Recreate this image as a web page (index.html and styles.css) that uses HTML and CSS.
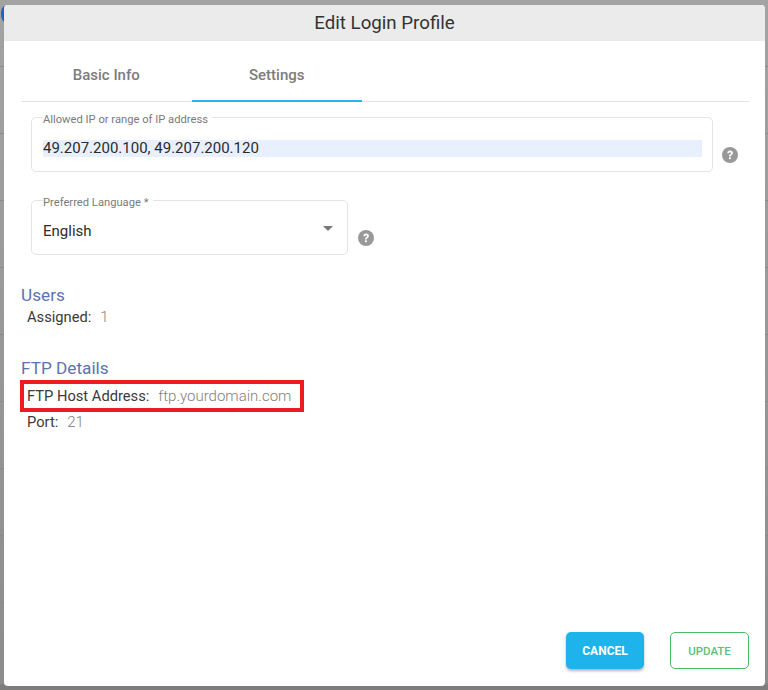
FILE: index.html
```html
<!DOCTYPE html>
<html lang="en">
<head>
<meta charset="utf-8">
<title>Edit Login Profile</title>
<link rel="stylesheet" href="styles.css">
</head>
<body>
<div class="page-dot"></div>
<main class="modal">
  <header class="modal-title">Edit Login Profile</header>
  <nav class="tabs">
    <div class="tab">Basic Info</div>
    <div class="tab tab-active">Settings</div>
  </nav>
  <section class="fields">
    <div class="field-row">
      <fieldset class="field field-wide">
        <legend>Allowed IP or range of IP address</legend>
        <div class="field-value field-filled">49.207.200.100, 49.207.200.120</div>
      </fieldset>
      <svg class="help" viewBox="0 0 16 16" aria-hidden="true"><circle cx="8" cy="8" r="8" fill="#999"/><path d="M5.3 6.2C5.4 4.6 6.5 3.6 8.1 3.6c1.6 0 2.8 1 2.8 2.3 0 1.1-.6 1.7-1.4 2.2-.6.4-.8.7-.8 1.3H7c0-1.1.3-1.7 1.1-2.2.6-.4.9-.7.9-1.2 0-.5-.4-.8-.9-.8-.6 0-1 .4-1.1 1H5.300z" fill="#fff"/><rect x="7" y="10.300" width="1.800" height="1.900" fill="#fff"/></svg>
    </div>
    <div class="field-row field-row-lang">
      <fieldset class="field field-narrow">
        <legend>Preferred Language *</legend>
        <div class="field-value field-select">English<span class="caret"></span></div>
      </fieldset>
      <svg class="help help-lang" viewBox="0 0 16 16" aria-hidden="true"><circle cx="8" cy="8" r="8" fill="#999"/><path d="M5.3 6.2C5.4 4.6 6.5 3.6 8.1 3.6c1.6 0 2.8 1 2.8 2.3 0 1.1-.6 1.7-1.4 2.2-.6.4-.8.7-.8 1.3H7c0-1.1.3-1.7 1.1-2.2.6-.4.9-.7.9-1.2 0-.5-.4-.8-.9-.8-.6 0-1 .4-1.1 1H5.300z" fill="#fff"/><rect x="7" y="10.300" width="1.800" height="1.900" fill="#fff"/></svg>
    </div>
  </section>
  <section class="details">
    <h2 class="details-heading">Users</h2>
    <p class="detail"><span class="detail-label">Assigned:</span><span class="detail-value">1</span></p>
    <h2 class="details-heading details-heading-ftp">FTP Details</h2>
    <p class="detail detail-marked"><span class="detail-label">FTP Host Address:</span><span class="detail-value">ftp.yourdomain.com</span></p>
    <p class="detail detail-port"><span class="detail-label">Port:</span><span class="detail-value">21</span></p>
  </section>
  <footer class="actions">
    <button class="btn btn-cancel" type="button">CANCEL</button>
    <button class="btn btn-update" type="button">UPDATE</button>
  </footer>
</main>
</body>
</html>
```
FILE: styles.css
```css
* { box-sizing: border-box; }
html, body { margin: 0; height: 690px; overflow: hidden; }
body {
  padding: 5px 3px 4px 4px;
  background:
    repeating-linear-gradient(transparent 0 66px, #8a8a8a 66px 67px),
    linear-gradient(#a3a3a3, #989898 50%, #8c8c8c 99%, #7d7d7d 99.3%);
  font-family: Roboto, "Liberation Sans", sans-serif;
}
.page-dot {
  position: absolute;
  left: 1px;
  top: 6px;
  width: 8px;
  height: 16px;
  border-radius: 50%;
  background: #1a62c4;
}
.modal {
  position: relative;
  height: 681px;
  display: flex;
  flex-direction: column;
  background: #fff;
  border-radius: 4px;
}
.modal-title {
  height: 36px;
  flex: none;
  background: #ebebeb;
  border-radius: 4px 4px 0 0;
  color: #333;
  font-size: 18.700px;
  line-height: 36px;
  text-align: center;
}
.tabs {
  display: flex;
  flex: none;
  height: 61px;
  margin: 0 16px 0 17px;
  border-bottom: 1px solid #e2e2e2;
}
.tab {
  width: 170.5px;
  padding-top: 25px;
  color: #7c7c7c;
  font-size: 15px;
  font-weight: 500;
  text-align: center;
}
.tab-active {
  height: 61px;
  border-bottom: 2px solid #29b6f0;
}
.fields {
  flex: none;
  padding: 6px 0 0 27px;
}
.field-row {
  display: flex;
  align-items: flex-start;
}
.field-row-lang { margin-top: 19.500px; }
.field {
  margin: 0;
  padding: 0 10px 0 11px;
  height: 63.500px;
  border: 1px solid #e4e4e4;
  border-radius: 5px;
}
.field-wide { width: 682px; }
.field-narrow { width: 317px; }
.field legend {
  margin-left: 0;
  padding: 5px 4px 0 0;
  color: #7a7a7a;
  font-size: 11.200px;
  line-height: 13px;
}
.field-value {
  margin-top: 14px;
  color: #2b2b2b;
  font-size: 15px;
  line-height: 17px;
}
.field-filled { background: #e8f0fe; }
.field-select {
  position: relative;
  margin-top: 13.500px;
}
.caret {
  position: absolute;
  right: 4px;
  top: 3.500px;
  width: 0;
  height: 0;
  border-left: 5px solid transparent;
  border-right: 5px solid transparent;
  border-top: 5px solid #777;
}
.help {
  flex: none;
  width: 16px;
  height: 16px;
  margin: 39px 0 0 9px;
}
.help-lang { margin-left: 10px; }
.details {
  flex: 1;
  padding: 31.500px 0 0 17px;
}
.details-heading {
  margin: 0;
  color: #5d72b3;
  font-size: 17.200px;
  font-weight: 400;
  line-height: 19px;
}
.details-heading-ftp { margin-top: 33px; }
.detail {
  width: fit-content;
  margin: 4px 0 0 6px;
  color: #3a3a3a;
  font-size: 14.700px;
  line-height: 17px;
}
.detail-label { margin-right: 9px; }
.detail-value { color: #808080; font-size: 15px; font-weight: 300; }
.detail-marked {
  position: relative;
  width: 284px;
  height: 32px;
  margin: 2px 0 0 -1px;
  padding: 4px 0 0 3px;
  border: 4px solid #ed1c24;
  white-space: nowrap;
}
.detail-port { margin-top: 2px; }
.actions {
  display: flex;
  flex: none;
  justify-content: flex-end;
  gap: 26px;
  padding: 0 16px 17px 0;
}
.btn {
  height: 37px;
  padding: 0;
  font-family: inherit;
  font-size: 12px;
  font-weight: 700;
  border-radius: 5px;
}
.btn-cancel {
  width: 78px;
  border: 0;
  background: #1fb3ec;
  color: #fff;
  box-shadow: 0 2px 3px rgba(0,0,0,.3);
}
.btn-update {
  width: 79px;
  border: 1px solid #4cbb6a;
  background: #fff;
  color: #5cbf78;
  font-size: 11.500px;
  font-weight: 500;
}
```
